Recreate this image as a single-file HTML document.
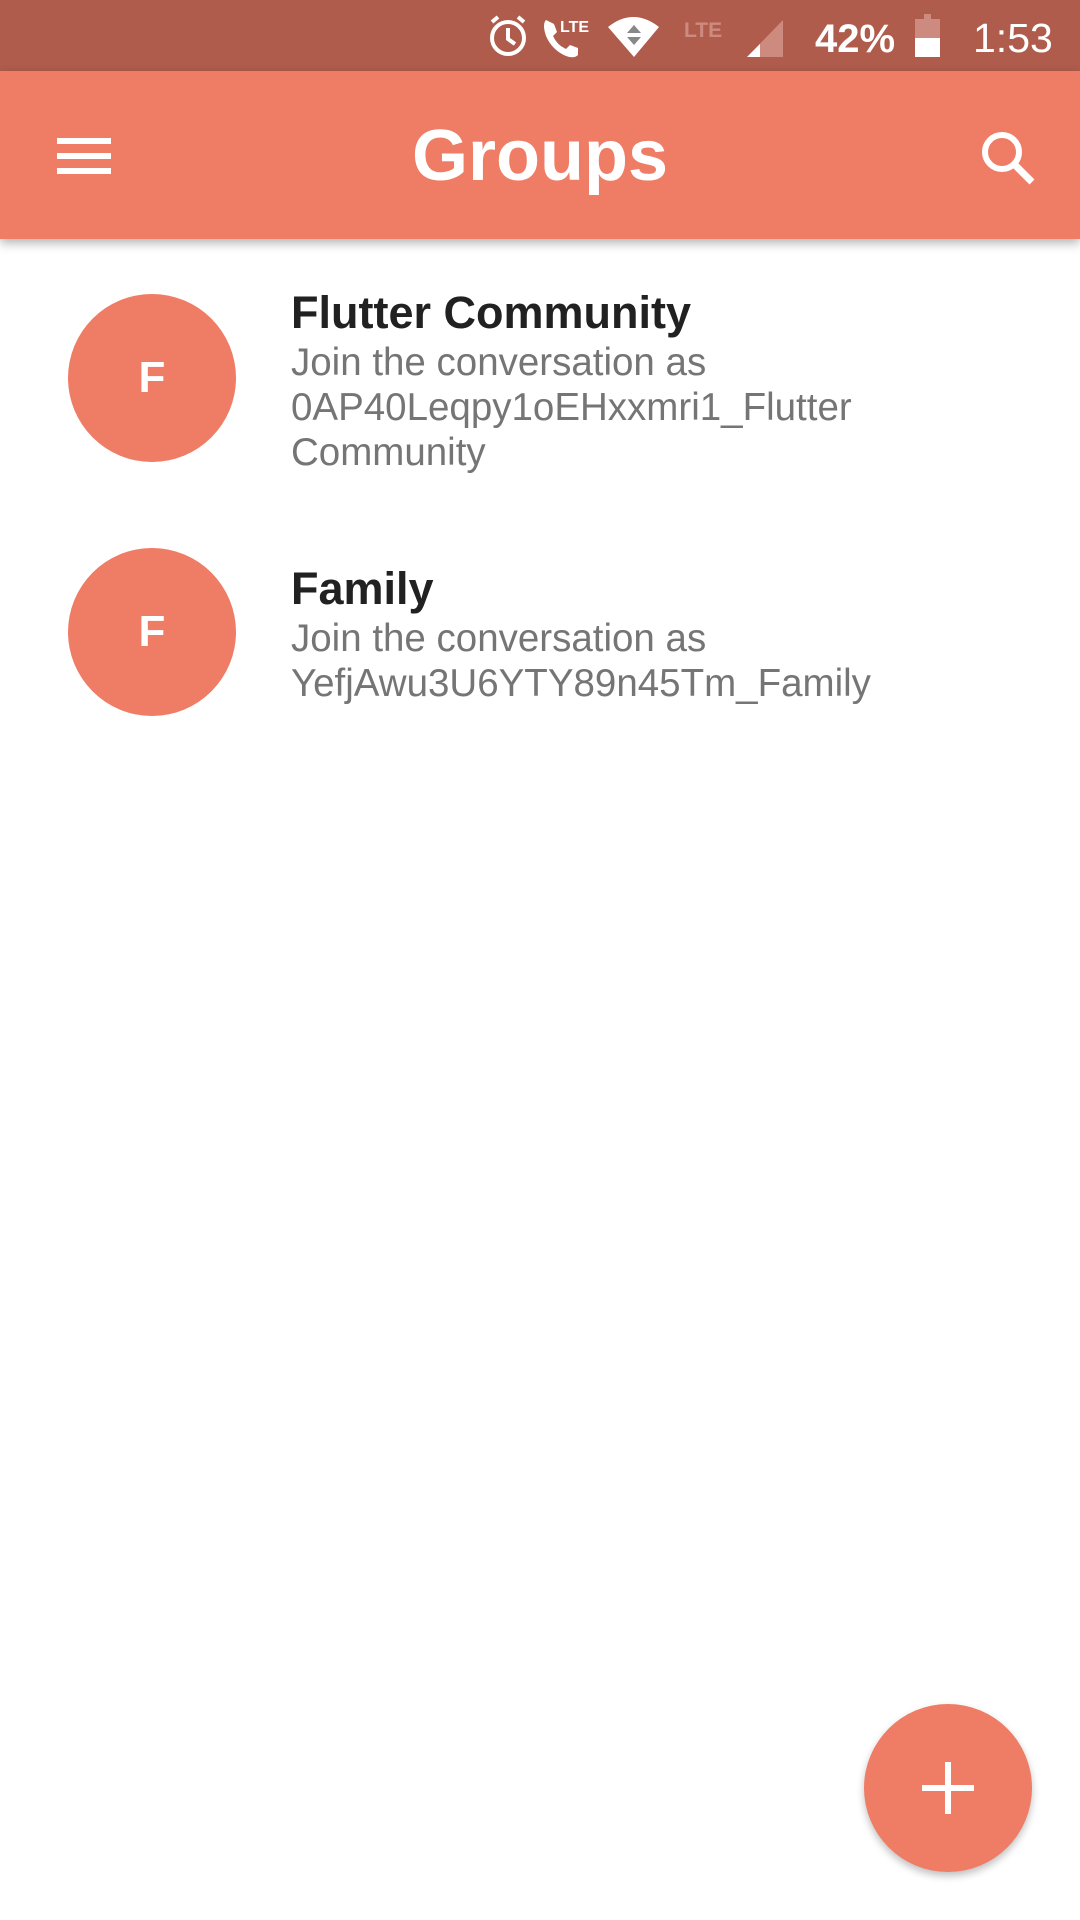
<!DOCTYPE html>
<html><head><meta charset="utf-8"><style>
*{margin:0;padding:0;box-sizing:border-box}
body{width:1080px;height:1920px;background:#fff;position:relative;overflow:hidden;font-family:"Liberation Sans",sans-serif}
.sb{position:absolute;left:0;top:0;width:1080px;height:71px;background:#b05c4c}
.ab{position:absolute;left:0;top:71px;width:1080px;height:168px;background:#ef7c65;box-shadow:0 4px 10px rgba(0,0,0,.3)}
.t{position:absolute;white-space:nowrap}
.av{position:absolute;left:68px;width:168px;height:168px;border-radius:50%;background:#ef7c65;color:#fff;font-size:44px;font-weight:bold;text-align:center;line-height:168px}
.h{font-weight:bold;font-size:45px;color:#212121;left:291px}
.s{font-size:38.5px;color:#757575;left:291px}
</style></head><body>
<div class="sb">
<svg width="1080" height="71" style="position:absolute;left:0;top:0">
<g fill="none" stroke="#fff" stroke-width="4">
<circle cx="508" cy="38" r="16"/><path d="M508 28v11l7 5M492 22l6-5M524 22l-6-5"/>
</g>
<path d="M546 20q-4 4 0 16 6 14 20 20 8 3 12-1v-7l-8-3-4 4q-9-4-13-13l4-4-3-8z" fill="#fff"/>
<text x="560" y="32" font-size="16" font-weight="bold" fill="#fff" font-family="Liberation Sans">LTE</text>
<path d="M608 27q25-20 51 0l-25 30z" fill="#fff"/>
<path d="M627 33l7-8 7 8z M627 37l7 8 7-8z" fill="#888"/>
<text x="684" y="37" font-size="21" font-weight="bold" fill="#cd8a7e" font-family="Liberation Sans">LTE</text>
<path d="M783 20v37h-36z" fill="#cd8a7e"/><path d="M760 44v13h-13z" fill="#fff"/>
<text x="815" y="52" font-size="40" font-weight="bold" fill="#fff" font-family="Liberation Sans">42%</text>
<rect x="924" y="14" width="7" height="5" fill="#cd8a7e"/><rect x="915" y="19" width="25" height="19" fill="#cd8a7e"/><rect x="915" y="38" width="25" height="19" fill="#fff"/>
<text x="973" y="52" font-size="41" fill="#fff" font-family="Liberation Sans">1:53</text>
</svg>
</div>
<div class="ab">
<div style="position:absolute;left:57px;top:67px;width:54px;height:6px;background:#fff"></div>
<div style="position:absolute;left:57px;top:82px;width:54px;height:6px;background:#fff"></div>
<div style="position:absolute;left:57px;top:97px;width:54px;height:6px;background:#fff"></div>
<div class="t" style="left:0;width:1080px;text-align:center;top:44px;font-size:72px;font-weight:bold;color:#fff">Groups</div>
<svg width="80" height="80" style="position:absolute;left:970px;top:50px"><circle cx="32" cy="31" r="17" fill="none" stroke="#fff" stroke-width="6"/><path d="M44 43l18 18" stroke="#fff" stroke-width="7"/></svg>
</div>
<div class="av" style="top:294px">F</div>
<div class="t h" style="top:287px">Flutter Community</div>
<div class="t s" style="top:341px">Join the conversation as</div>
<div class="t s" style="top:386px">0AP40Leqpy1oEHxxmri1_Flutter</div>
<div class="t s" style="top:431px">Community</div>
<div class="av" style="top:548px">F</div>
<div class="t h" style="top:563px">Family</div>
<div class="t s" style="top:617px">Join the conversation as</div>
<div class="t s" style="top:662px">YefjAwu3U6YTY89n45Tm_Family</div>
<div style="position:absolute;left:864px;top:1704px;width:168px;height:168px;border-radius:50%;background:#ef7c65;box-shadow:0 4px 8px rgba(0,0,0,.25)">
<div style="position:absolute;left:58px;top:81px;width:52px;height:6px;background:#fff"></div>
<div style="position:absolute;left:81px;top:58px;width:6px;height:52px;background:#fff"></div>
</div>
</body></html>
